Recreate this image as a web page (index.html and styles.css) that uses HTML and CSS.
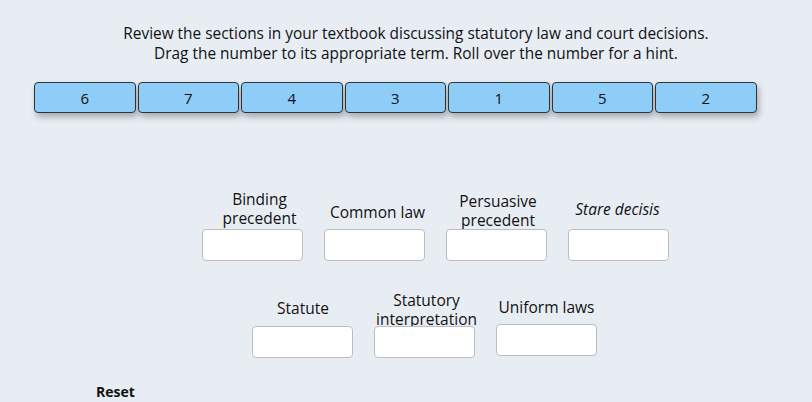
FILE: index.html
```html
<!DOCTYPE html>
<html>
<head>
<meta charset="utf-8">
<link rel="stylesheet" href="styles.css">
</head>
<body>
<div class="page">
  <div class="intro">
    <p>Review the sections in your textbook discussing statutory law and court decisions.</p>
    <p>Drag the number to its appropriate term. Roll over the number for a hint.</p>
  </div>
  <div class="tiles">
    <div class="tile">6</div>
    <div class="tile">7</div>
    <div class="tile">4</div>
    <div class="tile">3</div>
    <div class="tile">1</div>
    <div class="tile">5</div>
    <div class="tile">2</div>
  </div>
  <div class="terms terms-1">
    <div class="term"><div class="label l-binding">Binding<br>precedent</div><div class="drop"></div></div>
    <div class="term"><div class="label l-common">Common law</div><div class="drop"></div></div>
    <div class="term"><div class="label l-persuasive">Persuasive<br>precedent</div><div class="drop"></div></div>
    <div class="term"><div class="label l-stare"><em>Stare decisis</em></div><div class="drop"></div></div>
  </div>
  <div class="terms terms-2">
    <div class="term"><div class="label l-statute">Statute</div><div class="drop"></div></div>
    <div class="term"><div class="label l-interp">Statutory<br>interpretation</div><div class="drop"></div></div>
    <div class="term term-raised"><div class="label l-uniform">Uniform laws</div><div class="drop"></div></div>
  </div>
  <div class="reset">Reset</div>
</div>
</body>
</html>
```
FILE: styles.css
```css
html, body {
  margin: 0;
  padding: 0;
  background: #e8edf4;
}
body {
  font-family: "Open Sans", "Noto Sans", sans-serif;
  color: #111;
  width: 812px;
  height: 402px;
  overflow: hidden;
}
.page {
  display: flex;
  flex-direction: column;
}
.intro {
  padding-top: 24px;
  text-align: center;
  font-size: 15.4px;
  line-height: 20px;
  padding-left: 20px;
}
.intro p {
  margin: 0;
}
.tiles {
  display: flex;
  gap: 2px;
  margin-top: 18px;
  padding-left: 34px;
}
.tile {
  box-sizing: border-box;
  width: 101.5px;
  height: 31px;
  background: #8ecdf7;
  border: 1px solid #333;
  border-radius: 4px;
  box-shadow: 2px 4px 6px rgba(0, 0, 0, 0.28);
  display: flex;
  align-items: center;
  justify-content: center;
  font-size: 15px;
}
.terms {
  display: flex;
  gap: 21px;
  align-items: flex-end;
}
.terms-1 {
  margin-top: 73px;
  padding-left: 202px;
  height: 75px;
}
.terms-2 {
  margin-top: 0px;
  padding-left: 252px;
  height: 97px;
}
.term {
  display: flex;
  flex-direction: column;
  align-items: center;
  width: 101px;
}
.term-raised {
  margin-bottom: 2px;
}
.label {
  font-size: 15.5px;
  line-height: 19px;
  text-align: center;
  white-space: nowrap;
}
.label em {
  font-style: italic;
}
.l-binding { margin-bottom: 1px; margin-left: 14px; }
.l-common { margin-bottom: 7px; margin-left: 6px; }
.l-persuasive { margin-bottom: -1px; margin-left: 3px; }
.l-stare { margin-bottom: 10px; margin-right: 2px; }
.l-statute { margin-bottom: 8px; margin-left: 1px; }
.l-interp { margin-bottom: -3px; margin-left: 4px; }
.l-uniform { margin-bottom: 7px; }
.drop {
  box-sizing: border-box;
  width: 101px;
  height: 32px;
  background: #fff;
  border: 1px solid #bdbdbd;
  border-radius: 4px;
}
.reset {
  margin-top: 24px;
  padding-left: 96px;
  font-weight: bold;
  font-size: 14px;
}
```
